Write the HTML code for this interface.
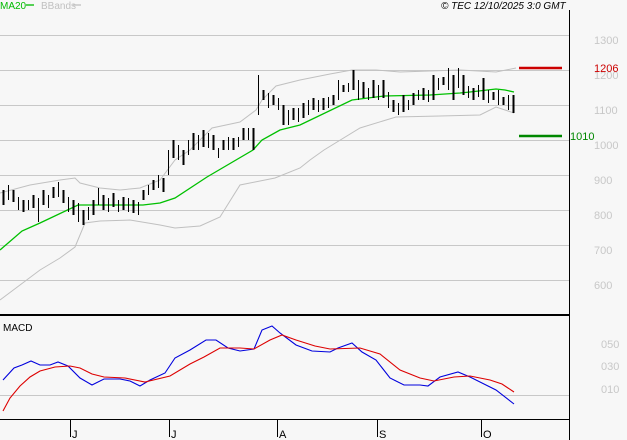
<!DOCTYPE html>
<html><head><meta charset="utf-8"><style>
html,body{margin:0;padding:0;background:#f7f7f7;width:627px;height:440px;overflow:hidden}
svg{display:block}
text{font-family:"Liberation Sans",sans-serif}
</style></head><body>
<svg width="627" height="440" viewBox="0 0 627 440" xmlns="http://www.w3.org/2000/svg">
<rect width="627" height="440" fill="#f7f7f7"/>
<g stroke="#c8c8c8" stroke-width="1">
<line x1="0" y1="35.5" x2="569" y2="35.5"/>
<line x1="0" y1="70.5" x2="569" y2="70.5"/>
<line x1="0" y1="105.5" x2="569" y2="105.5"/>
<line x1="0" y1="140.5" x2="569" y2="140.5"/>
<line x1="0" y1="175.5" x2="569" y2="175.5"/>
<line x1="0" y1="210.5" x2="569" y2="210.5"/>
<line x1="0" y1="245.5" x2="569" y2="245.5"/>
<line x1="0" y1="280.5" x2="569" y2="280.5"/>
<line x1="0" y1="395.5" x2="569" y2="395.5"/>
</g>
<g fill="#c8c8c8" font-size="11">
<text x="594" y="44">1300</text>
<text x="594" y="79">1200</text>
<text x="594" y="114">1100</text>
<text x="594" y="149">1000</text>
<text x="594" y="184">900</text>
<text x="594" y="219">800</text>
<text x="594" y="254">700</text>
<text x="594" y="289">600</text>
<text x="601" y="348">050</text>
<text x="601" y="370">030</text>
<text x="601" y="393">010</text>
</g>
<polyline fill="none" stroke="#c0c0c0" points="0,193 30,185 60,180 75,178 80,183 100,188 120,190 140,188 160,180 175,160 190,150 212,128 240,122 256,110 262,100 276,86 300,80 330,74 352,70 376,70 400,72 430,71 460,70 496,72 516,68"/>
<polyline fill="none" stroke="#c0c0c0" points="0,300 20,285 40,270 60,258 75,247 85,223 100,221 130,220 160,225 175,228 200,226 220,217 240,185 255,182 275,178 300,168 310,160 324,150 360,128 396,117 440,116 480,115 496,107 514,113"/>
<polyline fill="none" stroke="#00c000" stroke-width="1.3" points="0,250 22,231 40,223 78,205 100,205 143,205 160,203 175,198 207,177 253,150 262,140 280,130 300,125 352,100 384,96 430,95 460,93 470,92 496,89 505,90 514,92"/>
<g transform="translate(0.5,0)">
<path stroke="#000" stroke-width="1" fill="none" shape-rendering="crispEdges" d="
M3 190V205M8 185V200M13 190V202M18 197V210M23 200V212M28 200V210M33 195V208M38 198V222M43 190V205M48 195V208M53 187V198M58 182V197M63 190V203M68 197V212M73 200V215M78 203V222M83 210V225M88 207V220M93 200V215M98 188V205M103 195V210M108 198V212M113 193V207M118 200V212M123 197V210M128 198V212M133 200V213M138 202V215M143 190V200M148 185V195M153 180V190M158 175V188M163 178V192M168 150V175M173 140V158M178 145V160M183 150V165M188 140V155M193 133V150M198 135V150M203 130V147M208 133V148M213 135V150M218 148V158M223 140V150M228 137V150M233 138V150M238 137V147M243 128V140M248 128V140M253 128V150M258 75V115M263 90V100M268 93V108M273 95V105M278 98V110M283 105V125M288 110V125M293 108V120M298 108V122M303 103V118M308 100V115M313 98V110M318 100V112M323 98V110M328 97V108M333 95V105M338 80V100M343 85V92M348 83V92M353 70V90M358 80V100M363 82V98M368 88V100M373 80V98M378 85V100M383 80V98M388 92V108M393 100V112M398 103V115M403 95V112M408 100V110M413 93V105M418 90V100M423 88V100M428 90V102M433 75V100M438 78V90M443 77V85M448 68V90M453 75V100M458 68V88M463 75V95M468 86V98M473 88V100M478 85V97M483 78V100M488 90V103M493 92V100M498 90V105M503 97V105M508 95V110M513 95V113"/>
<path stroke="#000" stroke-width="1.6" fill="none" shape-rendering="crispEdges" d="
M3 190V205M13 190V202M23 200V212M33 195V208M43 190V205M53 187V198M63 190V203M73 200V215M83 210V225M93 200V215M103 195V210M113 193V207M123 197V210M133 200V213M143 190V200M153 180V190M163 178V192M173 140V158M183 150V165M193 133V150M203 130V147M213 135V150M223 140V150M233 138V150M243 128V140M253 128V150M263 90V100M273 95V105M283 105V125M293 108V120M303 103V118M313 98V110M323 98V110M333 95V105M343 85V92M353 70V90M363 82V98M373 80V98M383 80V98M393 100V112M403 95V112M413 93V105M423 88V100M433 75V100M443 77V85M453 75V100M463 75V95M473 88V100M483 78V100M493 92V100M503 97V105M513 95V113"/>
</g>
<line x1="519" y1="68" x2="562" y2="68" stroke="#cc0000" stroke-width="2.5"/>
<line x1="519" y1="136" x2="562" y2="136" stroke="#008800" stroke-width="2.5"/>
<text x="594" y="72" fill="#cc0000" font-size="11">1206</text>
<text x="570" y="140" fill="#008800" font-size="11">1010</text>
<line x1="569.5" y1="10" x2="569.5" y2="443" stroke="#000" stroke-width="1"/>
<line x1="0" y1="315" x2="569" y2="315" stroke="#000" stroke-width="2"/>
<line x1="0" y1="419.5" x2="569" y2="419.5" stroke="#000" stroke-width="1"/>
<polyline fill="none" stroke="#0000dd" stroke-width="1.1" points="3,380 14,368 22,365 31,361 40,365 50,365 58,362 68,366 80,378 92,385 104,379 120,379 130,381 140,386 150,380 165,373 175,358 190,350 206,340 216,340 228,348 240,351 254,349 262,330 272,326 280,333 296,345 312,351 330,352 338,348 352,343 362,352 376,360 390,378 404,385 420,385 428,386 440,377 458,372 470,377 486,385 496,390 514,404"/>
<polyline fill="none" stroke="#dd0000" stroke-width="1.1" points="3,411 10,398 20,386 30,377 40,371 55,367 70,366 80,368 92,374 104,377 125,378 145,382 170,376 190,364 204,357 220,348 240,348 254,349 270,340 282,335 296,340 315,346 330,349 360,348 380,354 400,370 420,378 434,381 454,377 470,376 490,380 502,384 514,392"/>
<g stroke="#000" stroke-width="1">
<line x1="70.5" y1="419" x2="70.5" y2="437"/>
<line x1="169.5" y1="419" x2="169.5" y2="437"/>
<line x1="277.5" y1="419" x2="277.5" y2="437"/>
<line x1="377.5" y1="419" x2="377.5" y2="437"/>
<line x1="481.5" y1="419" x2="481.5" y2="437"/>
</g>
<g font-size="11" fill="#000">
<text x="72" y="438">J</text>
<text x="171" y="438">J</text>
<text x="279" y="438">A</text>
<text x="379" y="438">S</text>
<text x="483" y="438">O</text>
<text x="3" y="331" font-size="10">MACD</text>
</g>
<text x="0" y="9" font-size="10" fill="#00bb00">MA20</text>
<line x1="26" y1="5" x2="34" y2="5" stroke="#00bb00" stroke-width="1.3"/>
<text x="41" y="9" font-size="10" fill="#c0c0c0">BBands</text>
<line x1="73" y1="5" x2="81" y2="5" stroke="#c0c0c0" stroke-width="1.3"/>
<text x="441" y="9" font-size="10" font-style="italic" fill="#000">© TEC 12/10/2025 3:0 GMT</text>
</svg>
</body></html>
